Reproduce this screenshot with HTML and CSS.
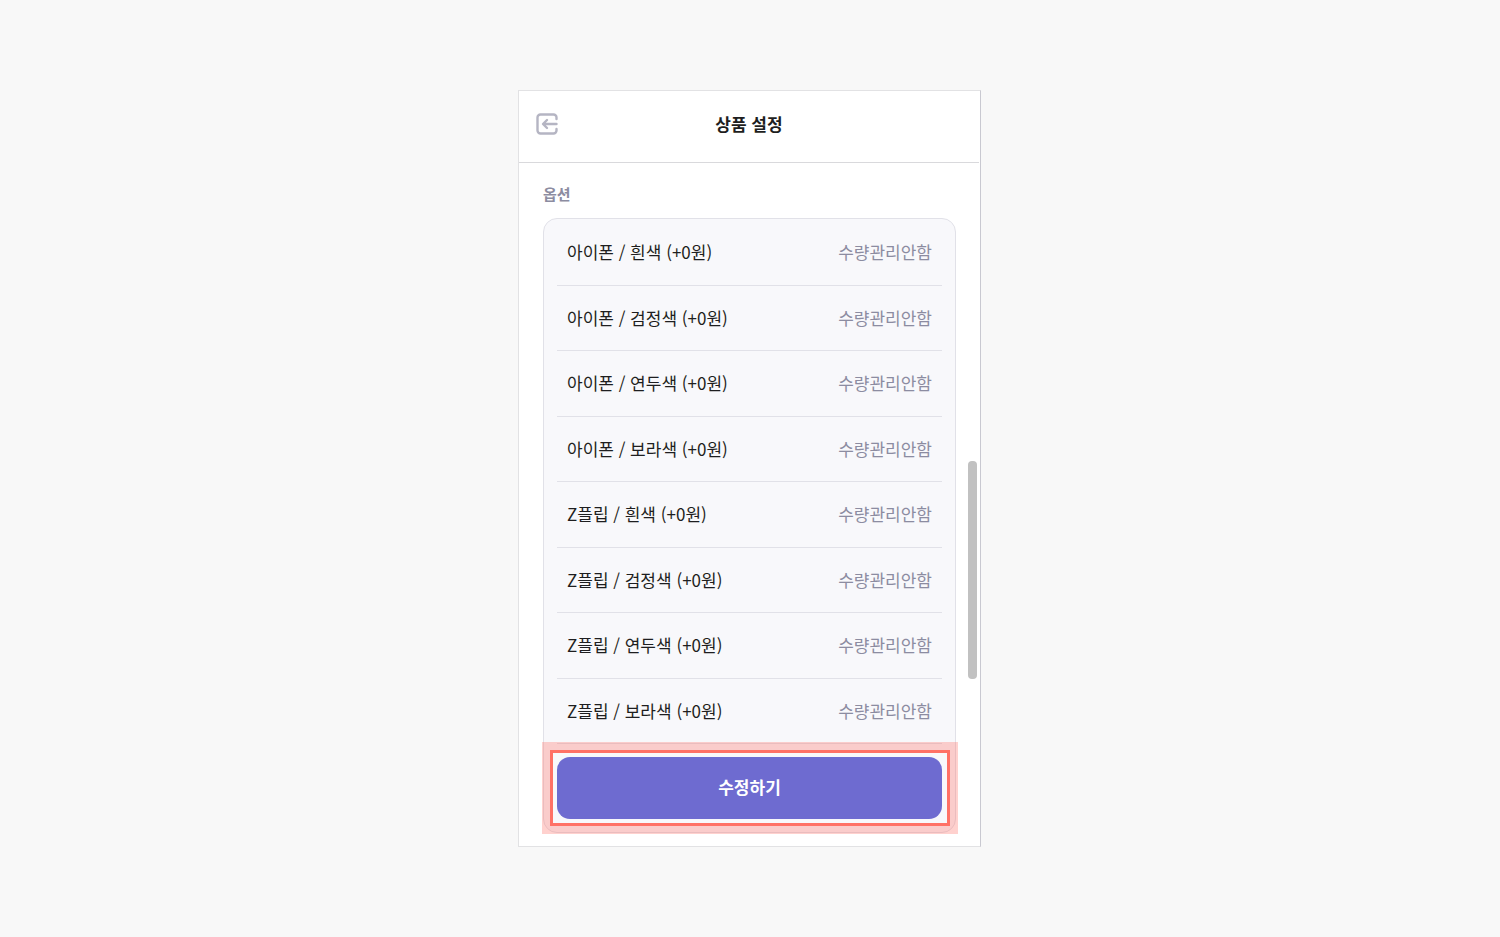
FILE: index.html
```html
<!DOCTYPE html>
<html lang="ko">
<head>
  <meta charset="UTF-8">
  <meta name="viewport" content="width=device-width, initial-scale=1.0">
  <title>상품 설정</title>
  <link rel="stylesheet" href="styles.css">
</head>
<body>
  <main class="panel">
    <header class="topbar">
      <button class="back" type="button" aria-label="뒤로">
        <svg width="24" height="24" viewBox="0 0 24 24" fill="none" stroke="#b5b5c3" stroke-width="2.4" stroke-linecap="round" stroke-linejoin="round">
          <path d="M21.5 7V5.5a3 3 0 0 0-3-3H5.500a3 3 0 0 0-3 3v13a3 3 0 0 0 3 3h13a3 3 0 0 0 3-3V17"/>
          <path d="M21.5 12H8.500M12 8l-4 4 4 4"/>
        </svg>
      </button>
      <h1>상품 설정</h1>
    </header>
    <section class="content">
      <h2>옵션</h2>
      <div class="card">
        <ul class="options">
          <li><span>아이폰 / 흰색 (+0원)</span><span class="stock">수량관리안함</span></li>
          <li><span>아이폰 / 검정색 (+0원)</span><span class="stock">수량관리안함</span></li>
          <li><span>아이폰 / 연두색 (+0원)</span><span class="stock">수량관리안함</span></li>
          <li><span>아이폰 / 보라색 (+0원)</span><span class="stock">수량관리안함</span></li>
          <li><span>Z플립 / 흰색 (+0원)</span><span class="stock">수량관리안함</span></li>
          <li><span>Z플립 / 검정색 (+0원)</span><span class="stock">수량관리안함</span></li>
          <li><span>Z플립 / 연두색 (+0원)</span><span class="stock">수량관리안함</span></li>
          <li><span>Z플립 / 보라색 (+0원)</span><span class="stock">수량관리안함</span></li>
        </ul>
        <div class="highlight">
          <button class="edit" type="button">수정하기</button>
        </div>
      </div>
    </section>
    <div class="scroll-thumb"></div>
  </main>
</body>
</html>
```
FILE: styles.css
```css
:root {
  --bg: #f8f8f8;
  --card: #f8f8fb;
  --line: #e1e1e8;
  --text: #1e1e20;
  --muted: #8c8ca1;
  --primary: #6e6bd0;
  --mark: #ff7166;
}
* { box-sizing:border-box; }
body { margin:0; min-height:100vh; padding-right:1px; display:flex; align-items:center; justify-content:center; background:var(--bg); color:var(--text); font:17px/24px "Noto Sans CJK KR",sans-serif; }
h1, h2, ul { margin:0; padding:0; }
button { border:0; padding:0; font:inherit; cursor:pointer; }

.panel { position:relative; width:100%; max-width:463px; background:#fff; border:1px solid #e2e2e4; border-right-color:#c9c9d1; }

/* header */
.topbar { display:grid; grid-template-columns:24px 1fr 24px; align-items:center; height:72px; margin-right:1px; padding:0 16px 6px; border-bottom:1px solid #d9d9dc; }
.topbar h1 { font-size:17px; font-weight:700; text-align:center; }
.back { display:flex; background:none; }

/* option list */
.content { padding:19px 24px 13px; }
.content h2 { margin-bottom:12px; color:var(--muted); font-size:15px; font-weight:700; }
.card { padding:1px 13px 13px; background:var(--card); border:1px solid var(--line); border-radius:14px; }
.options { display:grid; grid-template-rows:repeat(8,1fr); height:524px; list-style:none; }
.options li { display:flex; align-items:center; justify-content:space-between; padding:0 10px; border-bottom:1px solid var(--line); }
.stock { color:var(--muted); }

/* submit button with the guide frame around it */
.highlight { position:relative; margin-top:13px; }
.highlight::after { content:""; position:absolute; inset:-7px -8px -7px -7px; border:3px solid var(--mark); box-shadow:0 0 0 8px rgba(255,113,102,0.32); pointer-events:none; }
.edit { display:block; width:100%; height:62px; padding-bottom:2px; background:var(--primary); color:#fff; font-weight:700; border-radius:13px; }

.scroll-thumb { position:absolute; top:370px; right:3px; width:9px; height:218px; background:#c1c1c1; border-radius:4px; }
```
